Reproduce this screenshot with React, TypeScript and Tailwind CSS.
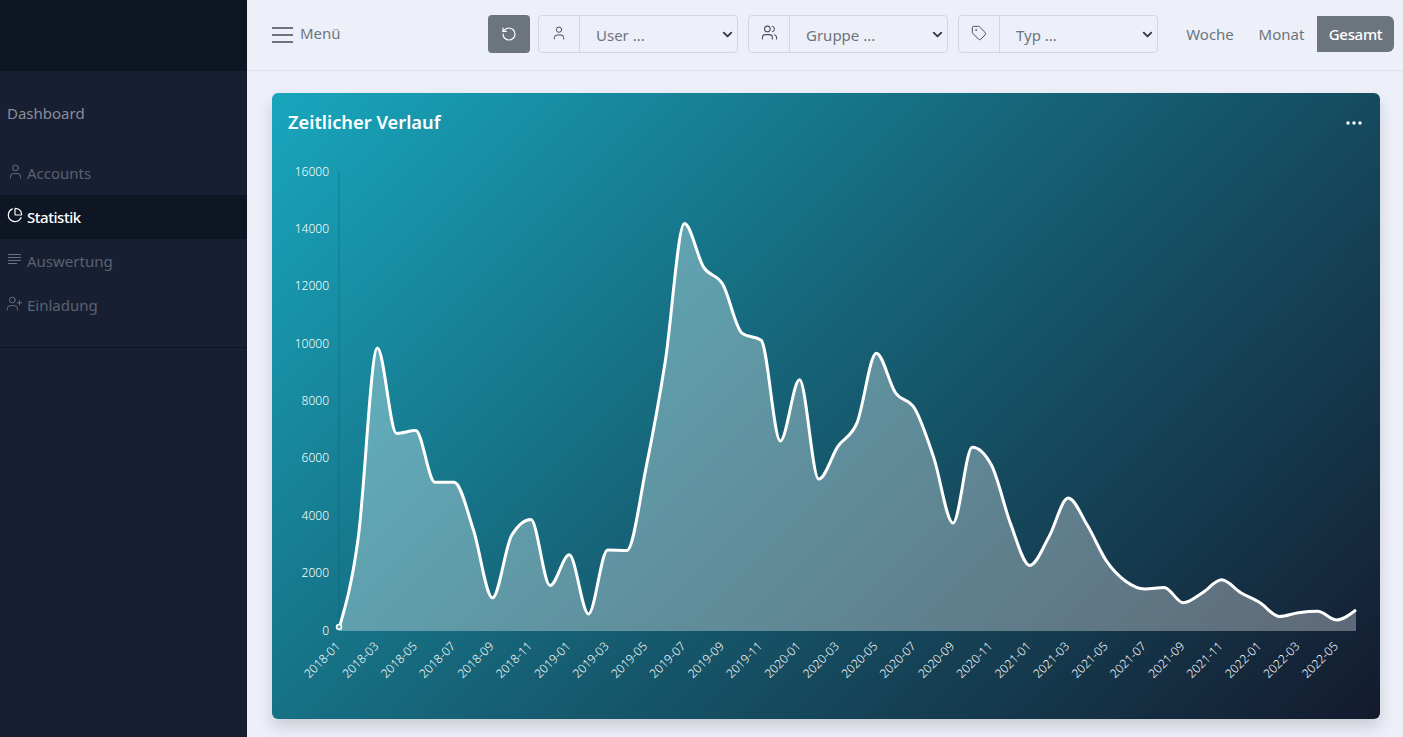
import { ChartPie, RotateCcw, Tag, User, UserPlus, Users, ChevronDown } from "lucide-react";
import type { ReactNode } from "react";

const FONT = "font-['Noto_Sans','Open_Sans',sans-serif]";

// chart geometry, relative to the svg (card left = 272, svg top = 151)
const PLOT_LEFT = 67;
const PLOT_BOTTOM = 479;
const PLOT_HEIGHT = 459;
const STEP = 1017 / 53;
const MAX = 16000;

const values = [
  50, 3200, 9830, 6850, 6950, 5150, 5150, 3500, 1120, 3300, 3850, 1550, 2620, 560, 2790, 2770, 5650, 9350, 14170,
  12650, 12050, 10350, 10100, 6590, 8720, 5260, 6400, 7230, 9650, 8270, 7720, 6000, 3730, 6370, 5750, 3700, 2250,
  3250, 4600, 3650, 2400, 1700, 1430, 1480, 950, 1300, 1750, 1300, 950, 470, 600, 650, 350, 700,
];

const yTicks = [0, 2000, 4000, 6000, 8000, 10000, 12000, 14000, 16000];

const months: string[] = [];
for (let y = 2018; y <= 2022; y++) {
  for (let m = 1; m <= 12; m += 2) {
    if (y === 2022 && m > 5) break;
    months.push(`${y}-${String(m).padStart(2, "0")}`);
  }
}

const toY = (v: number) => PLOT_BOTTOM - (v / MAX) * PLOT_HEIGHT;
const points = values.map((v, i) => [PLOT_LEFT + i * STEP, toY(v)]);

// monotone cubic, the curve goes flat at every local extreme like the original chart
function smoothPath(pts: number[][]) {
  const n = pts.length;
  const slopes = pts.map((_, i) => {
    if (i === 0 || i === n - 1) return 0;
    const s0 = (pts[i][1] - pts[i - 1][1]) / STEP;
    const s1 = (pts[i + 1][1] - pts[i][1]) / STEP;
    if (s0 * s1 <= 0) return 0;
    const p = (s0 + s1) / 2;
    return Math.sign(s0) * Math.min(Math.abs(s0), Math.abs(s1), 0.5 * Math.abs(p)) * 2;
  });
  slopes[0] = (3 * (pts[1][1] - pts[0][1])) / STEP / 2 - slopes[1] / 2;
  slopes[n - 1] = (3 * (pts[n - 1][1] - pts[n - 2][1])) / STEP / 2 - slopes[n - 2] / 2;

  let d = `M${pts[0][0]} ${pts[0][1]}`;
  for (let i = 0; i < n - 1; i++) {
    const dx = STEP / 3;
    d += ` C${pts[i][0] + dx} ${pts[i][1] + slopes[i] * dx} ${pts[i + 1][0] - dx} ${
      pts[i + 1][1] - slopes[i + 1] * dx
    } ${pts[i + 1][0]} ${pts[i + 1][1]}`;
  }
  return d;
}

const linePath = smoothPath(points);
const areaPath = `${linePath} L${points[points.length - 1][0]} ${PLOT_BOTTOM + 1} L${PLOT_LEFT} ${PLOT_BOTTOM + 1} Z`;

function Chart() {
  return (
    <svg width="1108" height="568" className="block font-light">
      <line x1={PLOT_LEFT} y1={20} x2={PLOT_LEFT} y2={PLOT_BOTTOM} stroke="#0b5d70" strokeOpacity="0.45" />
      <path d={areaPath} fill="#ffffff" fillOpacity="0.32" />
      <path d={linePath} fill="none" stroke="#ffffff" strokeWidth="3" strokeLinejoin="round" />
      <circle cx={PLOT_LEFT} cy={476} r="2.5" fill="#5fa5b5" stroke="#ffffff" strokeWidth="1.5" />
      {yTicks.map((t) => (
        <text key={t} x={57} y={toY(t) + 4.5} textAnchor="end" fontSize="12" fill="#ffffff">
          {t}
        </text>
      ))}
      {months.map((m, i) => {
        const x = PLOT_LEFT + i * 2 * STEP + 2;
        return (
          <text
            key={m}
            x={x}
            y={496}
            textAnchor="end"
            fontSize="12"
            fill="#ffffff"
            transform={`rotate(-45 ${x} 496)`}
          >
            {m}
          </text>
        );
      })}
    </svg>
  );
}

function NavItem({ icon, label, active }: { icon: ReactNode; label: string; active?: boolean }) {
  return (
    <div
      className={`flex h-11 items-center pl-[7px] text-[15px] ${
        active ? "bg-[#0f1623] font-medium tracking-[-0.03em] text-white" : "text-[#5b6170]"
      }`}
    >
      <span className={`flex w-5 -translate-y-[2px] items-center ${active ? "" : "text-[#6a7080]"}`}>{icon}</span>
      {label}
    </div>
  );
}

function FilterSelect({ icon, label }: { icon: ReactNode; label: string }) {
  return (
    <div className="flex h-[38px] w-[200px] rounded-[4px] border border-[#d3d7e0] text-[#6c757d]">
      <div className="flex w-[41px] items-center justify-center border-r border-[#d3d7e0] pb-[2px] text-[#495057]">
        {icon}
      </div>
      <div className="relative flex-1">
        <select className="h-full w-full appearance-none bg-transparent pl-4 pt-[4px] text-[15px] text-[#6c757d] outline-none">
          <option>{label}</option>
        </select>
        <ChevronDown
          size={15}
          strokeWidth={3}
          className="pointer-events-none absolute right-[2px] top-[11px] text-[#343a40]"
        />
      </div>
    </div>
  );
}

export default function App() {
  return (
    <div className={`flex h-screen overflow-hidden bg-[#edf0f9] ${FONT}`}>
      <aside className="flex w-[247px] shrink-0 flex-col bg-[#181f32]">
        <div className="h-[71px] bg-[#0f1623]" />
        <div className="border-b border-[#0f1623] pb-5">
          <div className="flex h-20 items-center pl-[7px] pt-1 text-[15px] text-[#8a8e98]">Dashboard</div>
          <NavItem icon={<User size={17} strokeWidth={1.4} />} label="Accounts" />
          <NavItem icon={<ChartPie size={16} strokeWidth={1.75} />} label="Statistik" active />
          <NavItem
            icon={
              <svg width="14" height="10" viewBox="0 0 14 10" stroke="currentColor" strokeWidth="1" className="ml-px">
                <path d="M0 .5h13M0 3.5h13M0 6.5h13M0 9.5h9" />
              </svg>
            }
            label="Auswertung"
          />
          <NavItem icon={<UserPlus size={17} strokeWidth={1.4} className="-ml-px" />} label="Einladung" />
        </div>
      </aside>

      <div className="flex min-w-0 flex-1 flex-col">
        <header className="flex h-[71px] shrink-0 items-center border-b border-[#dfe2ea] pb-[3px] pl-[25px] pr-[9px] shadow-[0_1px_2px_rgba(0,0,0,0.03)]">
          <div className="flex items-center text-[15px] text-[#6c757d]">
            <svg width="21" height="18" viewBox="0 0 21 18" className="mr-[7px] mt-[3px]" stroke="#6c757d" strokeWidth="2">
              <path d="M0 2h21M0 9h21M0 16h21" />
            </svg>
            Menü
          </div>
          <div className="ml-auto flex items-center gap-[10px]">
            <button className="mr-[-2px] flex h-[38px] w-[42px] items-center justify-center rounded-[4px] bg-[#6c757d] text-white">
              <RotateCcw size={16} strokeWidth={1.75} />
            </button>
            <FilterSelect icon={<User size={16} strokeWidth={1.5} />} label="User ..." />
            <FilterSelect icon={<Users size={17} strokeWidth={1.5} />} label="Gruppe ..." />
            <FilterSelect icon={<Tag size={16} strokeWidth={1.5} />} label="Typ ..." />
            <div className="ml-[6px] flex items-center text-[15px] text-[#6c757d]">
              <span className="w-[72px] pb-[5px] pt-[7px] text-center">Woche</span>
              <span className="w-[71px] pb-[5px] pt-[7px] text-center">Monat</span>
              <span className="w-[77px] rounded-r-[6px] bg-[#6c757d] py-[7px] text-center font-medium leading-[22px] tracking-[-0.02em] text-white">
                Gesamt
              </span>
            </div>
          </div>
        </header>

        <main className="flex-1 px-[25px] pt-[22px]">
          <section className="h-[626px] w-[1108px] rounded-[6px] bg-[linear-gradient(135deg,#18a6bd_0%,#166478_45%,#141a2e_100%)] shadow-[0_8px_16px_rgba(0,0,0,0.15)]">
            <div className="flex h-[58px] items-start justify-between pl-4 pr-[18px] pt-[14px]">
              <h2 className="text-[18.3px] font-semibold leading-[30px] text-white">Zeitlicher Verlauf</h2>
              <svg width="16" height="4" viewBox="0 0 16 4" fill="#ffffff" className="mt-[14px]">
                <circle cx="2" cy="2" r="1.7" />
                <circle cx="8" cy="2" r="1.7" />
                <circle cx="14" cy="2" r="1.7" />
              </svg>
            </div>
            <Chart />
          </section>
        </main>
      </div>
    </div>
  );
}
